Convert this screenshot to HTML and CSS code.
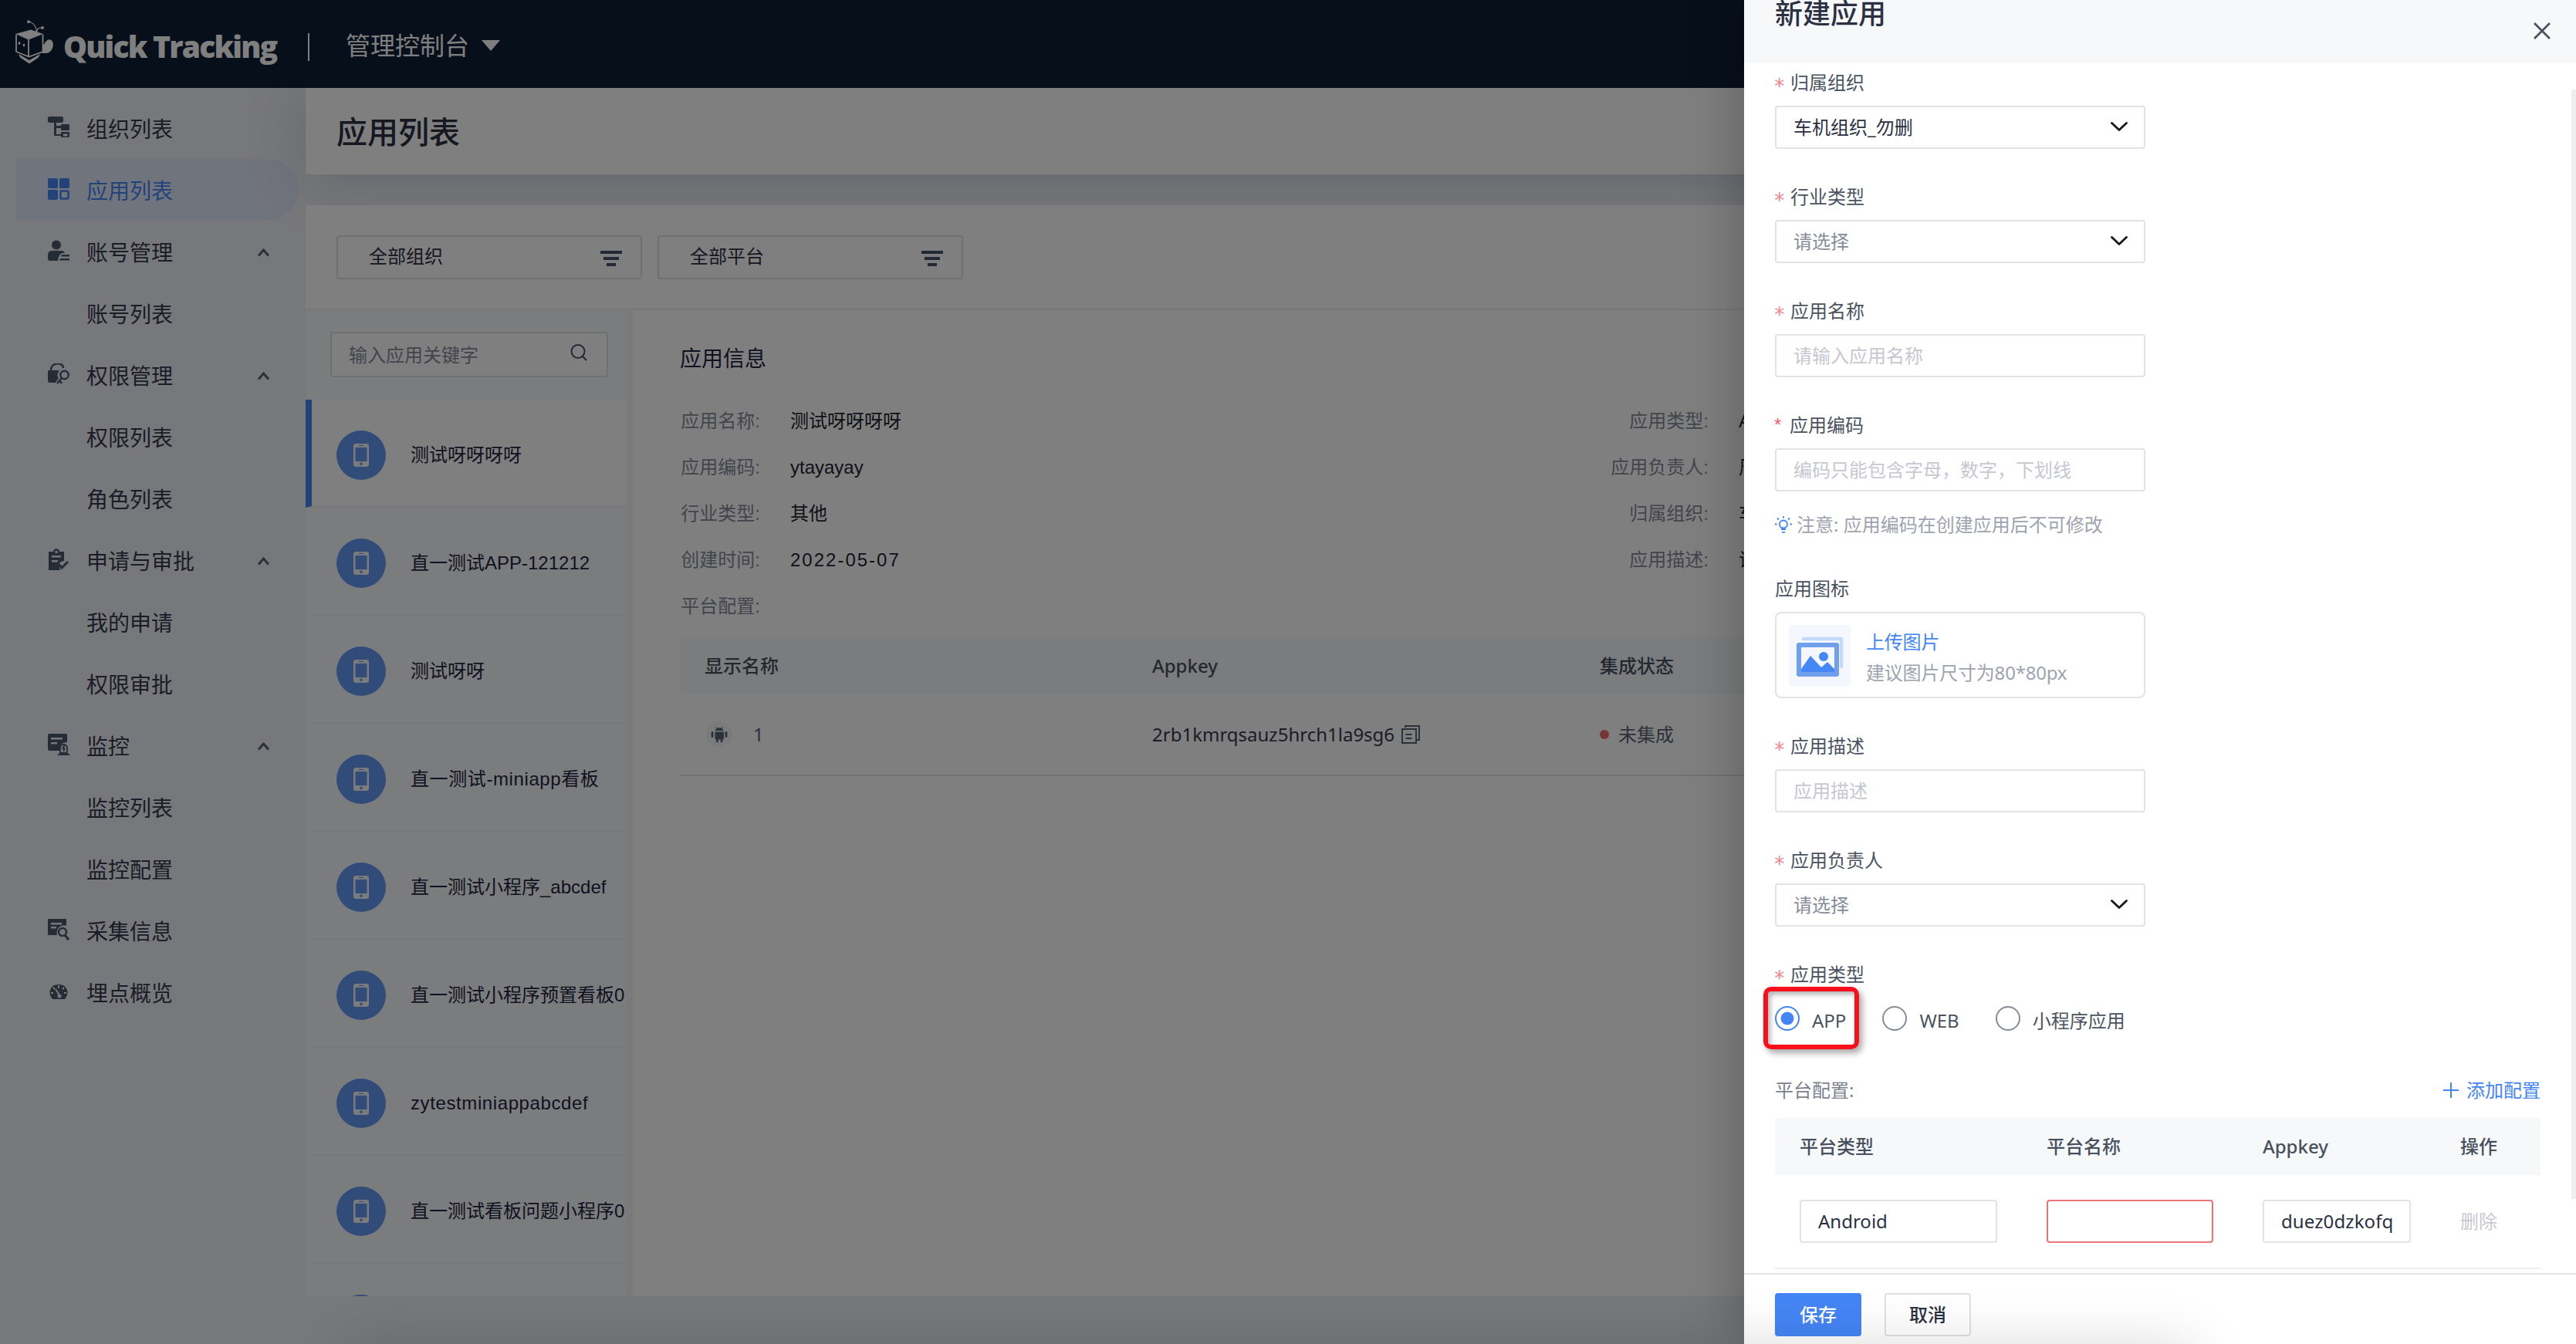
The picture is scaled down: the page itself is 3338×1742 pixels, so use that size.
FILE: index.html
```html
<!DOCTYPE html>
<html lang="zh-CN">
<head>
    <meta charset="UTF-8">
    <meta name="viewport" content="width=device-width, initial-scale=1.0">
    <title>Quick Tracking 管理控制台</title>
    <link rel="stylesheet" href="styles.css">
</head>
<body>
    <!-- 公用图标 -->
    <svg class="sprite" width="0" height="0">
        <symbol id="up" viewBox="0 0 16 12"><path d="M1.5 10.5 8 3l6.5 7.5" fill="none" stroke="currentColor" stroke-width="3"/></symbol>
        <symbol id="down" viewBox="0 0 22 12"><path d="M1.5 1.5 11 10.5l9.500-9" fill="none" stroke="currentColor" stroke-width="2.800" stroke-linecap="round" stroke-linejoin="round"/></symbol>
        <symbol id="filter" viewBox="0 0 28 20"><path d="M0 0h28v4H0zM4 8h20v4H4zM8 16h12v4H8z" fill="currentColor"/></symbol>
        <symbol id="phone" viewBox="0 0 20 30"><path fill-rule="evenodd" d="M3 0h14a3 3 0 0 1 3 3v24a3 3 0 0 1-3 3H3a3 3 0 0 1-3-3V3a3 3 0 0 1 3-3zM2.500 5v18h15V5zM7 2v1h6V2zM10 24.500a1.800 1.800 0 1 0 0 3.600 1.800 1.800 0 0 0 0-3.600z" fill="currentColor"/></symbol>
    </svg>

    <div class="page">
        <header class="topbar">
            <svg class="logo" viewBox="0 0 50 57">
                <path d="M1 18.500v22.500l16.500 6.500 18-6.500V18.500" fill="none" stroke="#fff" stroke-width="1.800"/>
                <path d="M0 18l20-5.500L36 18l-19 7.500z" fill="#fff"/>
                <path d="M17 25v22" stroke="#fff" stroke-width="1.800"/>
                <path d="M4 44l14 8 14-8-2 4.500-12 8-12-8z" fill="#fff"/>
                <ellipse cx="42.500" cy="34" rx="6" ry="9" transform="rotate(18 42.500 34)" fill="#fff"/>
                <path d="M35 32h6v11h-6z" fill="#fff"/>
                <path d="M27 16C28 9 23 3 17 2M28 15c0-5 2-5 7-5" fill="none" stroke="#fff" stroke-width="1.200"/>
                <circle cx="17" cy="2.200" r="2" fill="#fff"/>
                <circle cx="35" cy="10" r="2" fill="#fff"/>
                <ellipse cx="5" cy="30" rx="1.300" ry="2" fill="#fff"/>
                <ellipse cx="11" cy="32.500" rx="1.300" ry="2" fill="#fff"/>
            </svg>
            <span class="brand">Quick Tracking</span>
            <span class="split"></span>
            <span class="console">管理控制台</span>
            <span class="caret"></span>
        </header>

        <div class="body">
            <nav class="sidebar">
                <div class="menu">
                    <svg class="menu-icon" viewBox="0 0 28 28"><path d="M2 0h16a2 2 0 0 1 2 2v4a2 2 0 0 1-2 2h-7v4h6v-1a1 1 0 0 1 1-1h9a1 1 0 0 1 1 1v6a1 1 0 0 1-1 1h-9a1 1 0 0 1-1-1v-2h-6v8h6v-2a1 1 0 0 1 1-1h9a1 1 0 0 1 1 1v5a1 1 0 0 1-1 1h-9a1 1 0 0 1-1-1v-1H8V8H2a2 2 0 0 1-2-2V2a2 2 0 0 1 2-2zm18 22.500v3h5.500v-3z" fill-rule="evenodd"/></svg>
                    <span>组织列表</span>
                </div>
                <div class="menu active">
                    <svg class="menu-icon" viewBox="0 0 28 28"><rect width="13" height="13" rx="2"/><rect x="15" width="13" height="13" rx="2"/><rect y="15" width="13" height="13" rx="2"/><rect x="16.500" y="16.500" width="10" height="10" rx="1" fill="none" stroke="currentColor" stroke-width="2.500"/></svg>
                    <span>应用列表</span>
                </div>
                <div class="menu">
                    <svg class="menu-icon" viewBox="0 0 28 28"><circle cx="11" cy="6.500" r="6"/><path d="M6 14h12c2 0 3 1 4 3h-4c-3 2-5 6-5 10H3c-2 0-3-1-3-3v-4c0-4 2-6 6-6zM18 19h10v2.500H17zM16 24h12v2.500H15z"/></svg>
                    <span>账号管理</span>
                    <svg class="fold"><use href="#up"/></svg>
                </div>
                <div class="menu sub"><span>账号列表</span></div>
                <div class="menu">
                    <svg class="menu-icon" viewBox="0 0 28 28"><path d="M4 9C4-2 20-2 20 6" fill="none" stroke="currentColor" stroke-width="2.500"/><path d="M1 9h14c-3 4-3 8-1 10l-4 6H3a3 3 0 0 1-3-3V10z"/><circle cx="21.500" cy="15" r="5.200" fill="none" stroke="currentColor" stroke-width="2.500"/><path d="m18 19-6 7m3-4 3 4" fill="none" stroke="currentColor" stroke-width="2.500"/></svg>
                    <span>权限管理</span>
                    <svg class="fold"><use href="#up"/></svg>
                </div>
                <div class="menu sub"><span>权限列表</span></div>
                <div class="menu sub"><span>角色列表</span></div>
                <div class="menu">
                    <svg class="menu-icon" viewBox="0 0 28 28"><path fill-rule="evenodd" d="M1 4h6c0-5 8-5 8 0h6v12l-4 1-3 3 2 8H1zM5 9v2.500h12V9zM5 15v2.500h8V15zM9.500 3v3h3V3z"/><path d="m14 20 4 5 8-8" fill="none" stroke="currentColor" stroke-width="3"/></svg>
                    <span>申请与审批</span>
                    <svg class="fold"><use href="#up"/></svg>
                </div>
                <div class="menu sub"><span>我的申请</span></div>
                <div class="menu sub"><span>权限审批</span></div>
                <div class="menu">
                    <svg class="menu-icon" viewBox="0 0 28 28"><path fill-rule="evenodd" d="M2 0h22a1 1 0 0 1 1 1v10c-6 0-10 3-10 11H2a2 2 0 0 1-2-2V2a2 2 0 0 1 2-2zm2 5v2.500h15V5zM4 11v2.500h8V11z"/><path d="M16 25v-6c0-7 9-7 9 0v6zM13 27h15M21.500 15l-2 4h2l-1 4" fill="none" stroke="currentColor" stroke-width="1.800"/></svg>
                    <span>监控</span>
                    <svg class="fold"><use href="#up"/></svg>
                </div>
                <div class="menu sub"><span>监控列表</span></div>
                <div class="menu sub"><span>监控配置</span></div>
                <div class="menu">
                    <svg class="menu-icon" viewBox="0 0 28 28"><path fill-rule="evenodd" d="M1 0h22a1 1 0 0 1 1 1v8c-8-2-14 4-12 12H1a1 1 0 0 1-1-1V1a1 1 0 0 1 1-1zm3 5v2.500h14V5zM4 10v2.500h7V10z"/><circle cx="19" cy="17" r="5" fill="none" stroke="currentColor" stroke-width="2.500"/><path d="m22 21 5 6" stroke="currentColor" stroke-width="3"/></svg>
                    <span>采集信息</span>
                </div>
                <div class="menu">
                    <svg class="menu-icon" viewBox="0 0 28 28"><path d="M6 24C-1 16 3 5 14 5s15 11 8 19z"/><path d="M14 6v4M4 16h3M21 16h3M7 9l2 2M10 11l5 8M21 9l-2 2" stroke="#f0f1f6" stroke-width="2"/><circle cx="15" cy="20" r="2.500" fill="#f0f1f6"/></svg>
                    <span>埋点概览</span>
                </div>
            </nav>

            <main class="main">
                <h1 class="page-title">应用列表</h1>

                <section class="card">
                    <div class="filters">
                        <div class="filter">全部组织<svg><use href="#filter"/></svg></div>
                        <div class="filter">全部平台<svg><use href="#filter"/></svg></div>
                    </div>

                    <div class="content">
                        <aside class="apps">
                            <div class="search">
                                输入应用关键字
                                <svg viewBox="0 0 22 22"><circle cx="10" cy="9.500" r="8.500" fill="none" stroke="currentColor" stroke-width="2"/><path d="m16 16 5 5" stroke="currentColor" stroke-width="2.200"/></svg>
                            </div>
                            <div class="app-list">
                                <div class="app current"><i class="avatar"><svg><use href="#phone"/></svg></i><span>测试呀呀呀呀</span></div>
                                <div class="app"><i class="avatar"><svg><use href="#phone"/></svg></i><span>直一测试APP-121212</span></div>
                                <div class="app"><i class="avatar"><svg><use href="#phone"/></svg></i><span>测试呀呀</span></div>
                                <div class="app"><i class="avatar"><svg><use href="#phone"/></svg></i><span class="latin">直一测试-miniapp看板</span></div>
                                <div class="app"><i class="avatar"><svg><use href="#phone"/></svg></i><span>直一测试小程序_abcdef</span></div>
                                <div class="app"><i class="avatar"><svg><use href="#phone"/></svg></i><span>直一测试小程序预置看板0</span></div>
                                <div class="app"><i class="avatar"><svg><use href="#phone"/></svg></i><span class="latin">zytestminiappabcdef</span></div>
                                <div class="app"><i class="avatar"><svg><use href="#phone"/></svg></i><span>直一测试看板问题小程序0</span></div>
                                <div class="app"><i class="avatar"><svg><use href="#phone"/></svg></i></div>
                            </div>
                        </aside>

                        <div class="info">
                            <h2>应用信息</h2>
                            <div class="props">
                                <span class="key">应用名称:</span><span>测试呀呀呀呀</span><span class="key">应用类型:</span><span>APP</span>
                                <span class="key">应用编码:</span><span>ytayayay</span><span class="key">应用负责人:</span><span>周</span>
                                <span class="key">行业类型:</span><span>其他</span><span class="key">归属组织:</span><span>车机组织</span>
                                <span class="key">创建时间:</span><span class="date">2022-05-07</span><span class="key">应用描述:</span><span>试</span>
                                <span class="key">平台配置:</span>
                            </div>
                            <div class="tr th"><span>显示名称</span><span>Appkey</span><span>集成状态</span></div>
                            <div class="tr">
                                <span class="platform">
                                    <svg viewBox="0 0 34 34"><circle cx="17" cy="17" r="17" fill="#f6f7fa"/><path d="M11.500 12c1-5 10-5 11 0zM11.500 13.500h11.500V22a1.500 1.500 0 0 1-1.500 1.500h-8.500a1.500 1.500 0 0 1-1.500-1.500z" fill="#596275"/><path d="M8 14.500v5M26 14.500v5M14.500 23v3M20 23v3" stroke="#596275" stroke-width="2.800" stroke-linecap="round"/><path d="m13 7 2 3m6-3-2 3" stroke="#596275"/></svg>
                                    1
                                </span>
                                <span class="appkey">2rb1kmrqsauz5hrch1la9sg6<svg viewBox="0 0 24 24"><path d="M5 3V1h18v18h-3M1 5h18v18H1zM5.500 12h8M5.500 17h8" fill="none" stroke="currentColor" stroke-width="2"/></svg></span>
                                <span class="status">未集成</span>
                            </div>
                        </div>
                    </div>
                </section>
            </main>
        </div>

        <div class="mask"></div>

        <!-- 新建应用抽屉 -->
        <div class="drawer">
            <div class="drawer-head">
                <span>新建应用</span>
                <svg class="close" viewBox="0 0 22 22"><path d="m1 1 20 20M21 1 1 21" stroke="currentColor" stroke-width="2.800"/></svg>
            </div>
            <div class="form">
                <label class="label required">归属组织</label>
                <div class="field select">车机组织_勿删<svg><use href="#down"/></svg></div>
                <label class="label required">行业类型</label>
                <div class="field select empty">请选择<svg><use href="#down"/></svg></div>
                <label class="label required">应用名称</label>
                <div class="field hint">请输入应用名称</div>
                <label class="label required raised">应用编码</label>
                <div class="field hint">编码只能包含字母，数字，下划线</div>
                <p class="tip">
                    <svg viewBox="0 0 22 22"><g fill="none" stroke="currentColor" stroke-width="1.800"><circle cx="11" cy="10.500" r="5"/><path d="M8 17h6M9 20.800h4M11 0v2.500M0 10.500h2.500M19.500 10.500H22M3 2.500l2 2M19 2.500l-2 2"/></g></svg>
                    注意: 应用编码在创建应用后不可修改
                </p>
                <label class="label">应用图标</label>
                <div class="upload">
                    <svg viewBox="0 0 80 80">
                        <rect width="80" height="80" rx="4" fill="#f4f7fe"/>
                        <path d="M19 18h49v36" fill="none" stroke="#c5d9fa" stroke-width="4.500" stroke-linejoin="round" stroke-linecap="round"/>
                        <rect x="10" y="23" width="55" height="44" rx="3" fill="#70a0ec"/>
                        <path d="M16 29h43v32H16z" fill="#f4f7fe"/>
                        <path d="m16 57 12-17 14 15 8-7 9 9v4H16z" fill="#4487f6"/>
                        <circle cx="45" cy="41" r="6" fill="#4487f6"/>
                    </svg>
                    <div class="upload-text"><b>上传图片</b><span>建议图片尺寸为80*80px</span></div>
                </div>
                <label class="label required">应用描述</label>
                <div class="field hint">应用描述</div>
                <label class="label required">应用负责人</label>
                <div class="field select empty">请选择<svg><use href="#down"/></svg></div>
                <label class="label required">应用类型</label>
                <div class="radios">
                    <span class="radio checked">APP</span>
                    <span class="radio">WEB</span>
                    <span class="radio">小程序应用</span>
                    <div class="highlight"></div>
                </div>
                <div class="config-head">
                    <span>平台配置:</span>
                    <a class="add"><svg viewBox="0 0 20 20"><path d="M10 0v20M0 10h20" stroke="currentColor" stroke-width="2"/></svg>添加配置</a>
                </div>
                <div class="config th"><span>平台类型</span><span>平台名称</span><span>Appkey</span><span>操作</span></div>
                <div class="config">
                    <div class="field">Android</div>
                    <div class="field error"></div>
                    <div class="field"><span class="clip">duez0dzkofq</span></div>
                    <span class="delete">删除</span>
                </div>
            </div>
            <div class="drawer-foot">
                <button class="btn primary">保存</button>
                <button class="btn">取消</button>
            </div>
            <div class="scrollbar"></div>
        </div>

        <div class="bottom-shade"></div>
    </div>
</body>
</html>
```
FILE: styles.css
```css
*,
*::before {
    box-sizing: border-box;
}
body {
    margin: 0;
    font-family: "Noto Sans", "Noto Sans CJK SC", sans-serif;
    font-size: 24px;
    line-height: 36px;
    color: #2b3042;
}
svg {
    display: block;
    flex: none;
}
.sprite {
    position: absolute;
}
.page {
    position: relative;
    width: 100%;
    height: 100vh;
    overflow: hidden;
    background-color: #eff0f7;
}

/* 顶部导航 */
.topbar {
    position: relative;
    z-index: 2;
    display: flex;
    align-items: center;
    height: 114px;
    padding: 0 0 0 20px;
    background-color: #0e1e36;
    color: #fff;
}
.logo {
    width: 50px;
    height: 57px;
    margin-top: -5px;
}
.brand {
    width: 276px;
    margin: 5px 41px 0 12px;
    font: 800 39px/50px "Open Sans", sans-serif;
    letter-spacing: -1.8px;
    white-space: nowrap;
}
.split {
    width: 2px;
    height: 36px;
    margin: 7px 47px 0 0;
    background-color: #fff;
}
.console {
    margin-top: 4px;
    font-size: 32px;
}
.caret {
    margin: 3px 0 0 16px;
    border: 12px solid transparent;
    border-top: 14px solid #fff;
    border-bottom: 0;
}

/* 左侧菜单 */
.body {
    display: flex;
    height: 1566px;
}
.sidebar {
    width: 396px;
    flex: none;
    padding: 12px 9px 0 20px;
    font-size: 28px;
}
.menu {
    display: flex;
    align-items: center;
    height: 80px;
    padding: 1px 37px 0 42px;
    color: #343a4c;
}
.menu span {
    flex: 1;
    padding-left: 22px;
}
.menu.sub span {
    padding-left: 50px;
}
.menu.active {
    border-radius: 0 40px 40px 0;
    background-color: #e1e8f9;
    color: #4485f5;
}
.menu-icon {
    width: 28px;
    height: 28px;
    margin-top: -4px;
    fill: #4c586b;
    color: #4c586b;
}
.active .menu-icon {
    fill: #4485f5;
    color: #4485f5;
}
.fold {
    width: 17px;
    height: 12px;
    color: #596273;
}

/* 主内容 */
.main {
    flex: 1;
    min-width: 0;
    display: flex;
    flex-direction: column;
}
.page-title {
    height: 112px;
    margin: 0 0 40px;
    padding: 0 40px;
    font-size: 40px;
    font-weight: 500;
    line-height: 114px;
    background-color: #fff;
    border-radius: 0 0 4px 4px;
    box-shadow: 0 8px 80px rgba(38, 50, 85, 0.2);
}
.card {
    position: relative;
    flex: 1;
    min-height: 0;
    display: flex;
    flex-direction: column;
    background-color: #fff;
    border-radius: 4px;
    overflow: hidden;
}
.filters {
    display: flex;
    gap: 20px;
    height: 136px;
    padding: 39px 40px;
    border-bottom: 2px solid #edeef2;
}
.filter {
    display: flex;
    align-items: center;
    justify-content: space-between;
    width: 396px;
    height: 57px;
    padding: 0 24px 4px 40px;
    border: 2px solid #dee0e6;
    border-radius: 4px;
}
.filter svg {
    width: 28px;
    height: 20px;
    margin-top: 6px;
    color: #47546a;
}
.content {
    flex: 1;
    min-height: 0;
    display: flex;
}
.apps {
    width: 424px;
    flex: none;
    background-color: #f7f8fa;
    border-right: 8px solid #f4f5f9;
    font-family: "Liberation Sans", "Noto Sans CJK SC", sans-serif;
}
.search {
    display: flex;
    align-items: center;
    justify-content: space-between;
    width: 360px;
    height: 59px;
    margin: 28px 0 29px 32px;
    padding: 2px 25px 0 22px;
    background-color: #fff;
    border: 2px solid #dee0e6;
    border-radius: 4px;
    color: #858b97;
}
.search svg {
    width: 22px;
    height: 22px;
    margin-top: -7px;
    color: #47546a;
}
.app {
    display: flex;
    align-items: center;
    height: 140px;
    padding: 6px 0 0 32px;
    border-left: 8px solid transparent;
    border-bottom: 2px solid #eff0f4;
    color: #1f2540;
    white-space: nowrap;
    overflow: hidden;
}
.app.current {
    background-color: #fff;
    border-left-color: #4485f5;
}
.app .latin {
    letter-spacing: 0.6px;
}
.avatar {
    display: grid;
    place-items: center;
    flex: none;
    width: 64px;
    height: 64px;
    margin-right: 32px;
    border-radius: 50%;
    background-color: #6298f0;
    color: #f4f6fa;
}
.avatar svg {
    width: 20px;
    height: 30px;
}

/* 应用信息 */
.info {
    flex: 1;
    padding: 42px 60px 0 61px;
}
.info h2 {
    margin: 0 0 32px;
    font-size: 28px;
    font-weight: 400;
    line-height: 40px;
    color: #1f2540;
}
.props {
    display: grid;
    grid-template-columns: 103px 1088px 141px 1fr;
    grid-auto-rows: 60px;
    line-height: 60px;
    font-family: "Liberation Sans", "Noto Sans CJK SC", sans-serif;
    margin-bottom: 10px;
    color: #22242e;
}
.props .key {
    margin-right: -1px;
    color: #858b97;
    text-align: right;
    white-space: nowrap;
}
.props span:not(.key) {
    padding-left: 40px;
}
.props .date {
    letter-spacing: 2px;
}
.tr {
    display: grid;
    grid-template-columns: 580px 580px 1fr;
    align-items: center;
    height: 106px;
    padding-left: 32px;
    border-bottom: 2px solid #e3e5ec;
    color: #596275;
}
.tr.th {
    height: 74px;
    border: 0;
    background-color: #f7f8fb;
    color: #47505f;
    font-weight: 500;
}
.platform {
    display: flex;
    align-items: center;
    gap: 27px;
    padding-left: 2px;
}
.platform svg {
    width: 34px;
    height: 34px;
}
.appkey {
    display: flex;
    align-items: center;
    gap: 9px;
    color: #343a4c;
}
.appkey svg {
    width: 24px;
    height: 24px;
    color: #596275;
}
.status {
    display: flex;
    align-items: center;
    gap: 12px;
}
.status::before {
    content: "";
    width: 12px;
    height: 12px;
    border-radius: 50%;
    background-color: #f0686b;
}

/* 遮罩与抽屉 */
.mask {
    position: absolute;
    inset: 0;
    z-index: 3;
    background-color: rgba(0, 0, 0, 0.5);
}
.drawer {
    position: absolute;
    top: 0;
    right: 0;
    bottom: 0;
    z-index: 4;
    display: flex;
    flex-direction: column;
    width: 1078px;
    background-color: #fff;
    box-shadow: 0 0 70px rgba(0, 0, 0, 0.28);
}
.drawer-head {
    display: flex;
    justify-content: space-between;
    height: 82px;
    padding: 0 33px 0 40px;
    background-color: #f7f8fa;
    font-size: 36px;
    font-weight: 500;
    line-height: 36px;
}
.close {
    width: 22px;
    height: 22px;
    margin-top: 29px;
    color: #4b5361;
}
.form {
    flex: 1;
    min-height: 0;
    padding: 7px 46px 0 40px;
    overflow: hidden;
}
.label {
    display: flex;
    height: 48px;
    color: #4b5361;
}
.required::before {
    content: "*";
    width: 22px;
    padding-top: 5px;
    margin-left: -2px;
    font-family: "DejaVu Sans Mono", monospace;
    font-size: 26px;
    color: #f0868a;
}
.required.raised::before {
    width: 21px;
    padding: 0 0 0 1px;
    font-family: "Liberation Sans", sans-serif;
    font-size: 24px;
    color: #ef6468;
}
.field {
    display: flex;
    align-items: center;
    width: 480px;
    height: 56px;
    margin-bottom: 44px;
    padding: 0 22px;
    border: 2px solid #e1e3e7;
    border-radius: 4px;
    color: #2b3042;
}
.select {
    justify-content: space-between;
}
.select svg {
    width: 22px;
    height: 12px;
    margin: -2px -1px 0 0;
    color: #1b1517;
}
.empty {
    color: #868c9a;
}
.hint {
    color: #c5c8d1;
}
.tip {
    display: flex;
    align-items: center;
    gap: 6px;
    margin: -19px 0 47px;
    color: #9da3af;
}
.tip svg {
    width: 22px;
    height: 22px;
    color: #4485f5;
}
.upload {
    display: flex;
    align-items: center;
    gap: 20px;
    width: 480px;
    height: 112px;
    margin-bottom: 44px;
    padding: 2px 0 0 16px;
    border: 2px solid #e1e3e7;
    border-radius: 8px;
    line-height: 40px;
    color: #9da3af;
}
.upload svg {
    width: 80px;
    height: 80px;
}
.upload-text {
    padding-top: 4px;
    letter-spacing: -0.2px;
}
.upload b {
    display: block;
    font-weight: 400;
    color: #4485f5;
}
.radios {
    position: relative;
    display: flex;
    height: 32px;
    margin: 11px 0 59px;
    color: #4b5361;
}
.radio {
    display: flex;
    align-items: flex-start;
    gap: 16px;
    line-height: 38px;
    margin-right: 47px;
}
.radio::before {
    content: "";
    width: 32px;
    height: 32px;
    border: 2px solid #858b97;
    border-radius: 50%;
}
.radio.checked::before {
    border-color: #4485f5;
    background: radial-gradient(circle, #4485f5 8px, #fff 8.8px);
}
/* 红框标注 */
.highlight {
    position: absolute;
    left: -15px;
    top: -25px;
    width: 124px;
    height: 81px;
    border: 6px solid #f90f1c;
    border-radius: 10px;
    box-shadow: 4px 5px 8px rgba(0, 0, 0, 0.35), inset 3px 4px 6px rgba(0, 0, 0, 0.3);
}
.config-head {
    display: flex;
    justify-content: space-between;
    height: 54px;
    color: #7b818e;
}
.add {
    display: flex;
    gap: 10px;
    color: #4485f5;
}
.add svg {
    width: 20px;
    height: 20px;
    margin-top: 8px;
}
.config {
    display: grid;
    grid-template-columns: 256px 216px 192px 1fr;
    column-gap: 64px;
    align-items: center;
    height: 122px;
    padding: 0 32px;
    border-bottom: 2px solid #edeef1;
}
.config.th {
    height: 74px;
    border: 0;
    background-color: #f7f8fa;
    color: #47505f;
    font-weight: 500;
}
.config .field {
    width: auto;
    min-width: 0;
    margin: 0;
}
.config .error {
    border-color: #ec7377;
}
.clip {
    overflow: hidden;
    white-space: nowrap;
    letter-spacing: 0.1px;
}
.delete {
    color: #c8cad0;
}
.drawer-foot {
    display: flex;
    gap: 30px;
    height: 92px;
    padding: 24px 40px 0;
    border-top: 2px solid #e3e6e8;
}
.btn {
    width: 112px;
    height: 56px;
    padding: 0;
    border: 2px solid #dfe1e6;
    border-radius: 4px;
    background-color: #fff;
    font: inherit;
    font-weight: 500;
    color: #2b3042;
}
.btn.primary {
    border-color: #4485f5;
    background-color: #4485f5;
    color: #fff;
}
.scrollbar {
    position: absolute;
    top: 116px;
    right: 0;
    width: 6px;
    height: 1438px;
    background-color: #eeeff2;
}
/* 底部阴影 */
.bottom-shade {
    position: absolute;
    z-index: 5;
    left: 460px;
    bottom: -60px;
    width: 2380px;
    height: 50px;
    box-shadow: 0 0 80px rgba(0, 0, 0, 0.2);
}
```
